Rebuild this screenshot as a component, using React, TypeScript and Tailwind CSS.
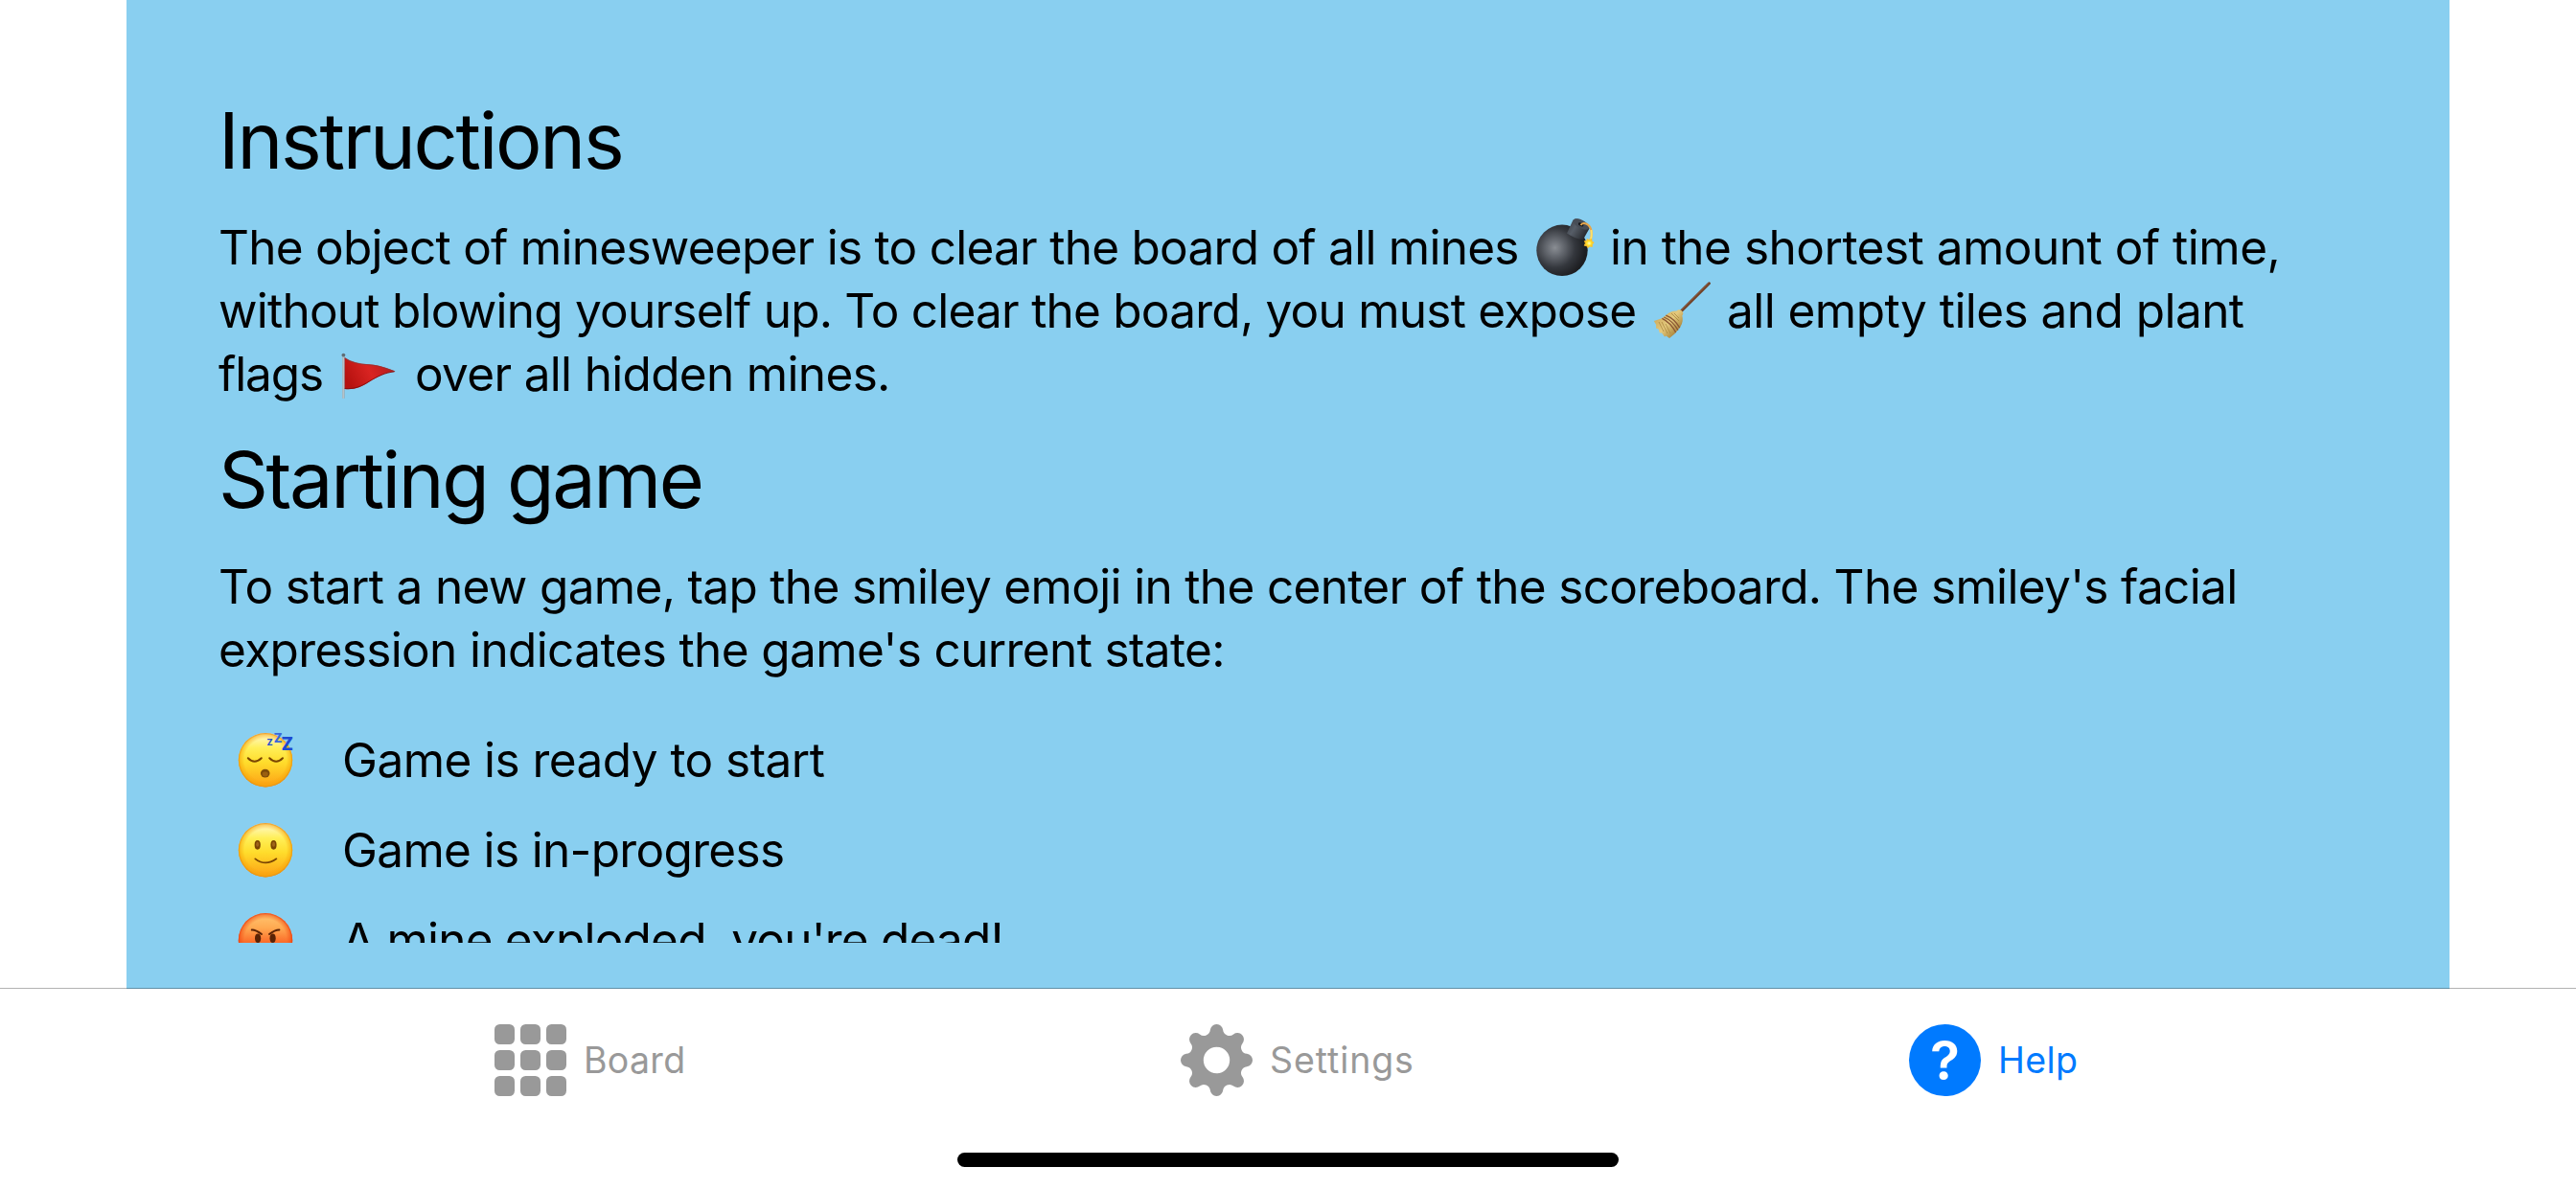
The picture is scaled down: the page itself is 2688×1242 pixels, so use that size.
import React from "react";

const GEAR_POINT_RADIUS = 32.24;
const GEAR_POINT_ANGLE = 11.92;

function gearPath() {
  const at = (deg: number) => {
    const a = (deg * Math.PI) / 180;
    return `${(37.5 + GEAR_POINT_RADIUS * Math.cos(a)).toFixed(2)} ${(37.5 + GEAR_POINT_RADIUS * Math.sin(a)).toFixed(2)}`;
  };
  let d = `M${at(-GEAR_POINT_ANGLE)}`;
  for (let k = 0; k < 8; k++) {
    d += `A6.7 6.7 0 0 1 ${at(k * 45 + GEAR_POINT_ANGLE)}`;
    d += `A6.75 6.75 0 0 0 ${at((k + 1) * 45 - GEAR_POINT_ANGLE)}`;
  }
  return d + "Z M51.2 37.5A13.7 13.7 0 1 0 23.8 37.5A13.7 13.7 0 1 0 51.2 37.5Z";
}

function BombEmoji() {
  return (
    <svg viewBox="0 0 64 64" className="size-16 shrink-0">
      <defs>
        <radialGradient id="bomb" cx="0.36" cy="0.45" r="0.6">
          <stop offset="0" stopColor="#8a8e94" />
          <stop offset="0.3" stopColor="#62666d" />
          <stop offset="0.65" stopColor="#34373d" />
          <stop offset="1" stopColor="#1d1e21" />
        </radialGradient>
        <linearGradient id="neck" x1="0" y1="0" x2="1" y2="0.6">
          <stop offset="0" stopColor="#33383f" />
          <stop offset="0.45" stopColor="#565d67" />
          <stop offset="1" stopColor="#25272b" />
        </linearGradient>
        <radialGradient id="spark">
          <stop offset="0" stopColor="#fffbd0" />
          <stop offset="0.45" stopColor="#ffe52e" />
          <stop offset="1" stopColor="#ffad1f" />
        </radialGradient>
      </defs>
      <circle cx="29" cy="35.3" r="26.7" fill="url(#bomb)" />
      <path d="M34 17.5 40.5 3.6Q44 .5 50 4.2Q57 7.5 57.6 12.2L51 24Q43 23.5 34 17.5Z" fill="url(#neck)" />
      <ellipse cx="49" cy="8" rx="9" ry="4.3" transform="rotate(28 49 8)" fill="#474d56" />
      <ellipse cx="48.6" cy="8.4" rx="3" ry="1.6" transform="rotate(28 48.6 8.4)" fill="#15161a" />
      <path d="M48.5 9C51 5 58.5 7.5 59.6 15.5C60.2 20 60 23 57 26" fill="none" stroke="#e5a54b" strokeWidth="2.1" />
      <path d="M59.4 14C60.2 19 60.2 22 58 25" fill="none" stroke="#ffe36a" strokeWidth="2" />
      <path d="M55 23.5 57.2 24.6 59.8 23.3 60 25.9 62.2 27.2 60.3 29 60.4 31.5 57.9 31 55.8 32.6 54.8 30.7 52.2 30.2 53.4 28 52.4 25.6 54.8 25.4Z" fill="url(#spark)" stroke="#ffc62b" strokeWidth="0.8" strokeLinejoin="round" />
    </svg>
  );
}

function BroomEmoji() {
  return (
    <svg viewBox="0 0 64 64" className="size-16 shrink-0">
      <defs>
        <linearGradient id="straw" x1="0.1" y1="0.3" x2="0.8" y2="0.9">
          <stop offset="0" stopColor="#d0ae60" />
          <stop offset="0.45" stopColor="#e4ca7e" />
          <stop offset="1" stopColor="#a07a30" />
        </linearGradient>
      </defs>
      <path d="M30 34 60.4 3.8" stroke="#6d3f25" strokeWidth="3" strokeLinecap="round" />
      <path d="M30 33.2 60 3.4" stroke="#9a6245" strokeWidth="0.9" />
      <path d="M26.5 32.5Q29 29.8 32 32.5Q34.5 35 32.3 37.5Q34 43 30.5 49Q26 56 19 61L15.5 58.5L14 59.5L11 55.5L8.8 55.5L7.6 51.5L5 50.5L5.2 47L2.8 43Q11 41 16 36.5Q20.5 32.3 26.5 32.5Z" fill="url(#straw)" />
      <path d="M15.3 37.2Q24 40.5 29.8 50.2M13.3 39Q22 42.5 28 52.6M11.4 40.4Q20 44.5 25.7 55" fill="none" stroke="#8a5533" strokeWidth="1.3" />
      <path d="M8 44 13 54M11 44 17 56M15 46 20 56M24 35 29 40M21 35 29 43" stroke="#a8853f" strokeWidth="0.8" />
    </svg>
  );
}

function FlagEmoji() {
  return (
    <svg viewBox="0 0 64 64" className="size-16 shrink-0">
      <defs>
        <linearGradient id="cloth" x1="0" y1="0.6" x2="1" y2="0.3">
          <stop offset="0" stopColor="#b5110f" />
          <stop offset="0.5" stopColor="#d92422" />
          <stop offset="1" stopColor="#b01c1e" />
        </linearGradient>
      </defs>
      <path d="M7.4 13.5V57.8" stroke="#98a5ad" strokeWidth="2.4" />
      <path d="M7.2 14V57.8" stroke="#d3dade" strokeWidth="0.8" />
      <circle cx="7.4" cy="12.6" r="1.9" fill="#5f6d76" />
      <path d="M8.6 15.3C16 20.5 24 21.8 34 22.3C46 23 52 26.2 61.7 29.7C51 30.5 43 35 34.5 40.5C26 46 19 49 8.6 48Z" fill="url(#cloth)" />
      <path d="M8.8 15.8C16 21 24 22.3 34 22.8C46 23.5 52 26.5 60.5 29.6" fill="none" stroke="#8f3434" strokeWidth="1.1" opacity="0.75" />
      <path d="M60.5 29.9C51 30.8 43 34.8 34.3 40C26 45.3 19 48.3 8.8 47.5" fill="none" stroke="#7d0e0f" strokeWidth="1" opacity="0.85" />
    </svg>
  );
}

function FaceDisc({ id, angry }: { id: string; angry?: boolean }) {
  return (
    <>
      <defs>
        <linearGradient id={`${id}-base`} x1="0" y1="0" x2="0" y2="1">
          <stop offset="0" stopColor={angry ? "#ffc772" : "#fff9d4"} />
          <stop offset="0.28" stopColor={angry ? "#ffa850" : "#ffef57"} />
          <stop offset="0.55" stopColor={angry ? "#fb6a28" : "#ffdc2b"} />
          <stop offset="1" stopColor={angry ? "#ec3323" : "#fd9f15"} />
        </linearGradient>
        <radialGradient id={`${id}-rim`}>
          <stop offset="0.78" stopColor={angry ? "#f04a12" : "#f59b00"} stopOpacity="0" />
          <stop offset="0.93" stopColor={angry ? "#f04a12" : "#f5a50a"} stopOpacity="0.5" />
          <stop offset="1" stopColor={angry ? "#e83c12" : "#e58a10"} stopOpacity="0.95" />
        </radialGradient>
      </defs>
      <circle cx="32" cy="32.2" r="28.2" fill={`url(#${id}-base)`} />
      <circle cx="32" cy="32.2" r="28.2" fill={`url(#${id}-rim)`} />
    </>
  );
}

function SleepingEmoji() {
  return (
    <svg viewBox="0 0 64 64" className="size-16 shrink-0">
      <FaceDisc id="sleep" />
      <g fill="none" stroke="#7a4503" strokeWidth="2" strokeLinecap="round">
        <path d="M13.8 30.3Q20.5 37.3 27.8 30.3" />
        <path d="M36.2 30.3Q43.2 37.3 50 30.3" />
      </g>
      <ellipse cx="31.7" cy="46.1" rx="4.8" ry="4.3" fill="#7d4a08" />
      <ellipse cx="31.7" cy="47" rx="3" ry="2.4" fill="#9b5f10" />
      <g className="font-[Inter] font-extrabold" fill="#1d4bd2">
        <text x="33.6" y="17.2" fontSize="9" fill="#2353cf">Z</text>
        <text x="40.8" y="13.6" fontSize="13" fill="#3a68da">Z</text>
        <text x="48.6" y="22.4" fontSize="18.5">Z</text>
      </g>
    </svg>
  );
}

function SmileEmoji() {
  return (
    <svg viewBox="0 0 64 64" className="size-16 shrink-0">
      <FaceDisc id="smile" />
      <g fill="#7a4503">
        <ellipse cx="23.7" cy="26.8" rx="3.1" ry="4.9" />
        <ellipse cx="40.5" cy="26.8" rx="3.1" ry="4.9" />
      </g>
      <g fill="#a0651b">
        <ellipse cx="23.7" cy="26.2" rx="1.5" ry="2.6" />
        <ellipse cx="40.5" cy="26.2" rx="1.5" ry="2.6" />
      </g>
      <path d="M21.3 41.3Q32 49.6 43.4 41.3" fill="none" stroke="#7a4503" strokeWidth="1.7" strokeLinecap="round" />
    </svg>
  );
}

function AngryEmoji() {
  return (
    <svg viewBox="0 0 64 64" className="size-16 shrink-0">
      <FaceDisc id="angry" angry />
      <g fill="none" stroke="#5a2306" strokeWidth="2" strokeLinecap="round">
        <path d="M17.8 21.6Q21.5 21.3 28 26" />
        <path d="M46.4 21.4Q42 21.3 36 26" />
      </g>
      <g fill="#5a2306">
        <ellipse cx="24.1" cy="30.3" rx="3.1" ry="4.7" />
        <ellipse cx="39.6" cy="30.3" rx="3.1" ry="4.7" />
      </g>
      <path d="M22 48Q32 40 42 48" fill="none" stroke="#5a2306" strokeWidth="2" />
    </svg>
  );
}

function BoardIcon() {
  return (
    <span className="grid size-[75px] grid-cols-3 gap-1.5">
      {Array.from({ length: 9 }, (_, i) => (
        <span key={i} className="rounded-[5.5px] bg-[#999999]" />
      ))}
    </span>
  );
}

function GearIcon() {
  return (
    <svg viewBox="0 0 75 75" className="size-[75px]" fill="#999999" fillRule="evenodd">
      <path d={gearPath()} />
    </svg>
  );
}

function HelpIcon() {
  return (
    <span className="flex size-[75px] items-center justify-center rounded-full bg-[#007aff] text-[57px] leading-[75px] font-semibold text-white">
      ?
    </span>
  );
}

const states = [
  { icon: <SleepingEmoji />, text: "Game is ready to start", spacing: "tracking-[-0.55px]" },
  { icon: <SmileEmoji />, text: "Game is in-progress", spacing: "tracking-[-0.66px]" },
  { icon: <AngryEmoji />, text: "A mine exploded, you're dead!", spacing: "tracking-[-0.8px]" },
];

export default function App() {
  return (
    <div className="flex h-[1242px] w-[2688px] flex-col overflow-hidden bg-white font-[Inter,sans-serif] text-black">
      <main className="mx-[132px] h-[1032px] shrink-0 bg-[#89cff0] pb-12">
        <div className="h-[984px] overflow-hidden pt-[97px] pl-24 whitespace-nowrap">
          <h1 className="text-[81px] leading-[100px] tracking-[-2.29px]">Instructions</h1>
          <div className="mt-7 text-[49.5px] leading-[66px]">
            <div className="flex h-[66px] items-center">
              <span className="w-[1373px] tracking-[-0.735px]">The object of minesweeper is to clear the board of all mines</span>
              <BombEmoji />
              <span className="ml-[15px] tracking-[-0.5px]">in the shortest amount of time,</span>
            </div>
            <div className="flex h-[66px] items-center">
              <span className="w-[1495px] tracking-[-0.765px]">without blowing yourself up. To clear the board, you must expose</span>
              <BroomEmoji />
              <span className="ml-[15px] tracking-[-0.54px]">all empty tiles and plant</span>
            </div>
            <div className="flex h-[66px] items-center">
              <span className="w-[123px] tracking-[-1.1px]">flags</span>
              <FlagEmoji />
              <span className="ml-[18px] tracking-[-0.67px]">over all hidden mines.</span>
            </div>
          </div>
          <h2 className="mt-7 text-[81px] leading-[100px] tracking-[-2.4px]">Starting game</h2>
          <div className="mt-7 text-[49.5px] leading-[66px]">
            <div className="tracking-[-0.665px]">To start a new game, tap the smiley emoji in the center of the scoreboard. The smiley's facial</div>
            <div className="tracking-[-0.62px]">expression indicates the game's current state:</div>
          </div>
          <ul className="mt-[35px] text-[49.5px] leading-[66px]">
            {states.map((s) => (
              <li key={s.text} className="flex h-[94px] items-center gap-12 pl-[17px]">
                {s.icon}
                <span className={s.spacing}>{s.text}</span>
              </li>
            ))}
          </ul>
        </div>
      </main>
      <nav className="relative -mt-px flex h-[211px] flex-col items-center border-t border-black/30 text-[37.5px] leading-[75px] text-[#999999]">
        <div className="mt-[37px] flex h-[75px] w-full pl-[516px]">
          <div className="flex w-[716px] items-center gap-[18px]">
            <BoardIcon />
            <span className="tracking-[0.3px]">Board</span>
          </div>
          <div className="flex w-[760px] items-center gap-[18px]">
            <GearIcon />
            <span className="tracking-[0.9px]">Settings</span>
          </div>
          <div className="flex items-center gap-[18px] text-[#007aff]">
            <HelpIcon />
            <span className="tracking-[0.4px]">Help</span>
          </div>
        </div>
        <div className="mt-[59px] h-[15px] w-[690px] rounded-full bg-black" />
      </nav>
    </div>
  );
}
